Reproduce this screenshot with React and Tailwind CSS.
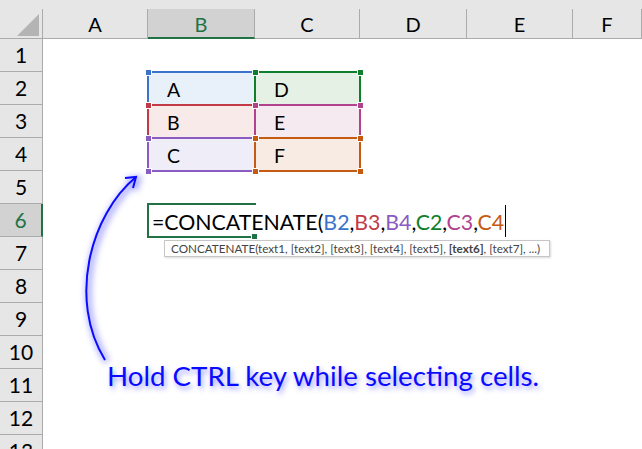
import React from "react";

const COLS = ["A", "B", "C", "D", "E", "F"];
const ROWS = [1, 2, 3, 4, 5, 6, 7, 8, 9, 10, 11, 12, 13];

const cellData = {
  "B2": { t: "A", bg: "bg-[#e8f0f9]" },
  "C2": { t: "D", bg: "bg-[#e6f1e6]" },
  "B3": { t: "B", bg: "bg-[#f9eaea]" },
  "C3": { t: "E", bg: "bg-[#f6eaf1]" },
  "B4": { t: "C", bg: "bg-[#efedf8]" },
  "C4": { t: "F", bg: "bg-[#f7ebe4]" },
};

const colX = { B: [148, 255], C: [255, 360] };
const rowY = { 2: [72, 105], 3: [105, 138], 4: [138, 171] };

const boxes = [
  { c: "B", r: 2, color: "#3a73c9" },
  { c: "B", r: 3, color: "#c13a45" },
  { c: "B", r: 4, color: "#8a5bc0" },
  { c: "C", r: 2, color: "#0e7f2a" },
  { c: "C", r: 3, color: "#b0428e" },
  { c: "C", r: 4, color: "#c55a11" },
];

function RangeBox({ c, r, color }) {
  const [x0, x1] = colX[c];
  const [y0, y1] = rowY[r];
  const corners = [
    [x0, y0],
    [x1, y0],
    [x0, y1],
    [x1, y1],
  ];
  return (
    <>
      <div
        className="absolute border-2"
        style={{ left: x0 - 1, top: y0 - 1, width: x1 - x0 + 2, height: y1 - y0 + 2, borderColor: color }}
      />
      {corners.map(([x, y], i) => (
        <div
          key={i}
          className="absolute w-[7px] h-[7px] border border-white"
          style={{ left: x - 3, top: y - 3, backgroundColor: color }}
        />
      ))}
    </>
  );
}

const refColors = {
  B2: "text-[#3a73c9]",
  B3: "text-[#c13a45]",
  B4: "text-[#8a5bc0]",
  C2: "text-[#0e7f2a]",
  C3: "text-[#b0428e]",
  C4: "text-[#c55a11]",
};

export default function App() {
  return (
    <div className="relative w-[642px] h-[449px] overflow-hidden bg-white font-['Lato',sans-serif] text-black">
      <div className="grid grid-cols-[43px_105px_107px_105px_107px_106px_69px] grid-rows-[39px_repeat(13,33px)]">
        {/* corner */}
        <div className="relative bg-[#e6e6e6] border-b border-[#ababab]">
          <div className="absolute right-0 top-[9px] bottom-0 w-px bg-[#ababab]" />
          <svg className="absolute left-0 top-0" width="43" height="39">
            <polygon points="17,36 39,36 39,14" fill="#b4b4b4" />
          </svg>
        </div>
        {COLS.map((c) => {
          const sel = c === "B";
          return (
            <div key={c} className="bg-[#e6e6e6] pt-[9px]">
              <div
                className={
                  "h-full flex justify-center text-[20px] leading-[29px] pt-px border-r border-[#ababab] " +
                  (sel
                    ? "bg-[#d2d2d2] text-[#217346] border-b-2 border-b-[#217346]"
                    : "border-b border-b-[#ababab]")
                }
              >
                {c}
              </div>
            </div>
          );
        })}
        {/* rows */}
        {ROWS.map((r) => (
          <React.Fragment key={r}>
            <div
              className={
                "flex justify-center text-[21px] leading-[32px] border-b border-[#ababab] " +
                (r === 6
                  ? "bg-[#d2d2d2] text-[#217346] border-r-2 border-r-[#217346]"
                  : "bg-[#e6e6e6] border-r border-r-[#ababab]")
              }
            >
              {r}
            </div>
            {COLS.map((c) => {
              const key = c + r;
              const d = cellData[key];
              if (key === "B6") {
                return (
                  <div key={key} className="relative z-10 whitespace-nowrap pl-[4px] pt-[2px] text-[21.3px] leading-[33px]">
                    ={"CONCATENATE("}
                    <span className={refColors.B2}>B2</span>,
                    <span className={refColors.B3}>B3</span>,
                    <span className={refColors.B4}>B4</span>,
                    <span className={refColors.C2}>C2</span>,
                    <span className={refColors.C3}>C3</span>,
                    <span className={refColors.C4}>C4</span>
                    <span className="inline-block w-px h-[32px] ml-px bg-black align-top -mt-[1px]" />
                  </div>
                );
              }
              return (
                <div key={key} className={"pl-[19px] pt-px text-[19.5px] leading-[33px] " + (d ? d.bg : "")}>
                  {d ? d.t : ""}
                </div>
              );
            })}
          </React.Fragment>
        ))}
      </div>

      {/* range outlines */}
      {boxes.map((b, i) => (
        <RangeBox key={i} {...b} />
      ))}

      {/* active cell B6 outline */}
      <div className="absolute left-[147px] top-[203px] w-[109px] h-[35px] border-2 border-r-0 border-[#217346]" />
      <div className="absolute left-[251px] top-[233px] w-[7px] h-[7px] bg-[#217346] border border-white" />

      {/* function tooltip */}
      <div className="absolute z-20 left-[164px] top-[240px] w-[386px] h-[17px] bg-white border border-[#c6c6c6] shadow-[1px_1px_2px_rgba(0,0,0,0.15)] pl-[6px] text-[11.7px] leading-[15px] text-[#444] whitespace-nowrap">
        CONCATENATE(text1, [text2], [text3], [text4], [text5], <b>[text6]</b>, [text7], ...)
      </div>

      {/* arrow */}
      <svg className="absolute left-0 top-0 pointer-events-none" width="642" height="449">
        <defs>
          <filter id="glow" x="-50%" y="-50%" width="200%" height="200%">
            <feGaussianBlur stdDeviation="3" />
          </filter>
        </defs>
        <g filter="url(#glow)" opacity="0.4" transform="translate(2,2)">
          <path d="M105 360 C 68 300, 90 215, 136 177" stroke="#3030ff" strokeWidth="6" fill="none" />
          <path d="M125 178 L136 177 L133 188" stroke="#3030ff" strokeWidth="6" fill="none" />
        </g>
        <path d="M105 360 C 68 300, 90 215, 136 177" stroke="#0a0aff" strokeWidth="2" fill="none" />
        <path d="M125 178 L136 177 L133 188" stroke="#0a0aff" strokeWidth="2" fill="none" strokeLinejoin="miter" />
      </svg>

      {/* annotation */}
      <div className="absolute left-[107px] top-[358px] whitespace-nowrap text-[27.7px] leading-[36px] text-[#0a0aff] [text-shadow:2px_3px_5px_rgba(60,60,255,0.5)]">
        Hold CTRL key while selecting cells.
      </div>
    </div>
  );
}
